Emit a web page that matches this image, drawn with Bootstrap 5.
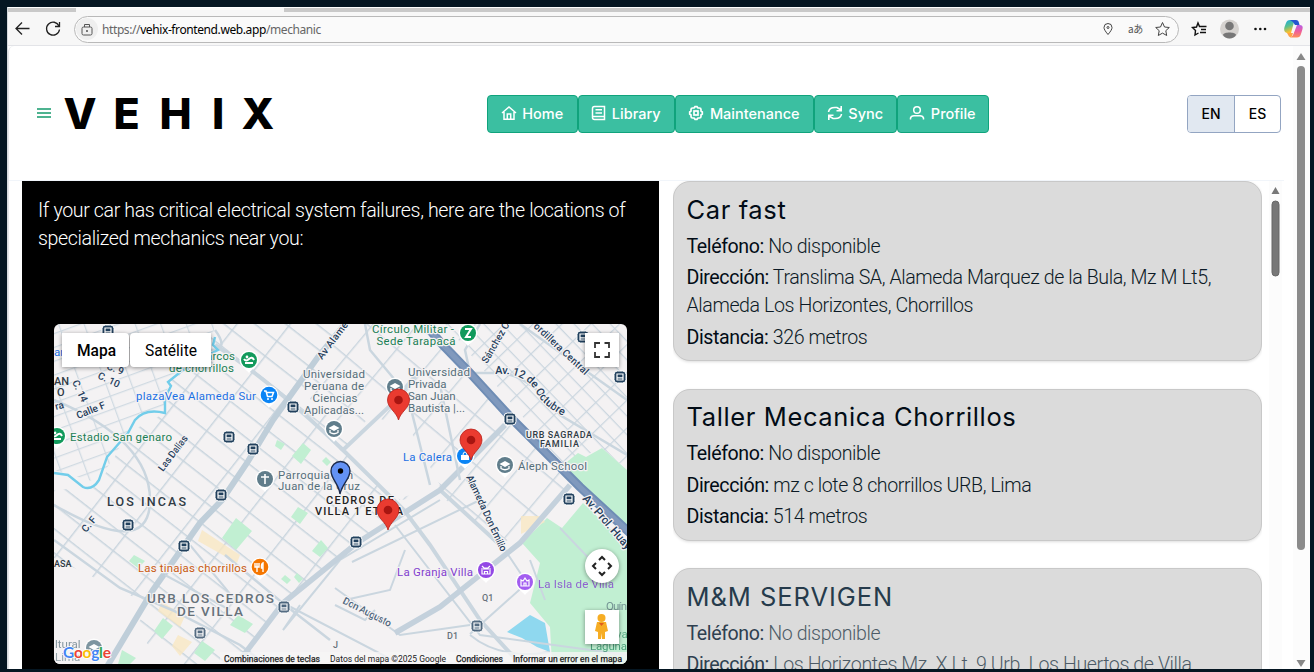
<!DOCTYPE html>
<html lang="en">
<head>
<meta charset="utf-8">
<title>Vehix</title>
<link rel="stylesheet" href="https://cdn.jsdelivr.net/npm/bootstrap@5.3.0/dist/css/bootstrap.min.css">
<style>
html,body{height:672px;overflow:hidden}
body{background:#051622;font-family:Roboto,sans-serif;padding:7px 4px 3px 7px}
svg{display:block;flex:none}
.window{height:662px;background:#fff;overflow:hidden;border-left:1px solid #d5d9dd}
.tabstrip{height:5px;background:#c9c9c9;border-top:1px solid #fff}
.tab-active{width:208px;margin-left:68px;background:#f7f7f7;height:5px}
.toolbar{height:34px;background:#f7f7f7;padding-top:1px;border-bottom:1px solid #e3e4e8}
.address{height:27px;width:1105px;margin-left:4px;margin-right:3px;border:1px solid #b9b9b9;border-radius:14px;background:#fafafa;padding:0 1px;font:12px "Noto Sans",sans-serif;color:#666;letter-spacing:-.4px}
.lockdot{width:22px;height:22px;border-radius:50%;background:#efefef}
.address b{font-weight:400;color:#000}
.page{height:623px;border-left:1px solid #e4e6e9;border-top-left-radius:6px}
.topbar{height:135px;padding:1px 0 0 27px;width:1275px;border-bottom:1px solid #f1f5fa}
.navgroup{margin-left:205px}
.navgroup .btn{height:38px;border:1px solid #10a37c;background:#3bbfa1;color:#fff;font:500 14.5px Inter,sans-serif;padding:0 1px 1px 0;border-radius:4px;gap:5.5px}
.navgroup .btn:nth-child(1){width:91px}.navgroup .btn:nth-child(2){width:97px}
.navgroup .btn:nth-child(3){width:139px}.navgroup .btn:nth-child(4){width:83px}.navgroup .btn:nth-child(5){width:92px}
.lang{margin-left:198px;width:94px;height:38px;border:1px solid #93a5c2;border-radius:4px;overflow:hidden;font:500 14px Inter,sans-serif;color:#000}
.lang span{width:46px;padding-bottom:1px}.lang .on{width:48px;background:#e1e8f1;border-right:1px solid #93a5c2}
.mappanel{width:637px;height:488px;margin-left:13px;background:#000;color:#fff}
.mappanel p{padding:15.500px 16px 0;font-size:19.6px;letter-spacing:-.37px;line-height:28px;height:143px;margin:0;font-weight:300;white-space:nowrap}
.mapbox{margin-left:32px;width:573px;height:340px;border-radius:6px;overflow:hidden}
.shops{width:589px;margin-left:14px;height:488px;overflow:hidden}
.shop{background:#dbdbdb;border:1px solid #c8c8c8;border-radius:17px;padding:11.5px 12px 8.3px 12.5px;box-shadow:0 1px 3px #0002;color:#0c1a26;font-weight:300;font-size:19.6px;letter-spacing:-.41px;line-height:28px;margin-bottom:27.7px;flex:none}
.shop h2{font:400 25.5px/32px Inter,sans-serif;letter-spacing:.62px;margin:0 0 7px;color:#020c16}
.shop p{margin:0 0 3.6px;white-space:nowrap}.shop p:last-child{margin:0}
.shop b{font-weight:400;color:#020c16}
.shop.faded{color:#4d5b67}.faded h2{color:#263b4c;letter-spacing:.95px}.faded b{color:#2e4050}
.innerbar{width:13px;margin-left:7px;background:#fcfcfc}
.outerbar{width:17px;background:#fcfcfc;height:623px}
.t{font-family:Roboto,sans-serif}
.halo{paint-order:stroke;stroke:#f4f2f3;stroke-width:2.5px;stroke-linejoin:round}
</style>
</head>
<body>
<div class="window">
  <div class="tabstrip"><div class="tab-active"></div></div>
  <div class="toolbar d-flex align-items-center">
    <svg width="62" height="28" viewBox="8 15 62 28" fill="none" stroke="#222" stroke-width="1.3"><path d="M29.500 28.500H16M22 22.500L16 28.500L22 34.500M59 26A6.500 6.500 0 1 0 59.500 29.500M59.500 22V26.500H55"/></svg>
    <div class="address d-flex align-items-center">
      <span class="lockdot d-flex align-items-center justify-content-center"><svg width="12" height="13" fill="none" stroke="#555"><rect x="1" y="4" width="10" height="8" rx="1.500"/><path d="M3.500 4V1.500H8.500V4"/><circle cx="6" cy="8" r=".6" fill="#222"/></svg></span>
      <span class="ps-1 flex-grow-1">https://<b>vehix-frontend.web.app</b>/mechanic</span>
      <svg width="76" height="24" viewBox="1101 17 76 24" fill="none" stroke="#444"><path d="M1108 34.500C1105 31 1104 29 1104 27.500A4 4 0 0 1 1112 27.500C1112 29 1111 31 1108 34.500Z"/><circle cx="1108" cy="27.500" r="1" /><text x="1128" y="33" font-size="10" letter-spacing="-.4" font-family="Noto Sans CJK JP,sans-serif" fill="#555" stroke="none">aあ</text><path d="M1162.500 22.500L1164.500 27L1169.300 27.500L1165.800 30.700L1166.700 35.500L1162.500 33.100L1158.300 35.500L1159.200 30.700L1155.700 27.500L1160.500 27Z"/></svg>
    </div>
    <svg width="124" height="30" viewBox="1182 14 124 30" fill="none">
      <defs><linearGradient id="cop" x1="0" y1="0" x2="0" y2="1"><stop offset="0" stop-color="#b65fe8"/><stop offset=".5" stop-color="#ee5d9c"/><stop offset="1" stop-color="#ff8f58"/></linearGradient><linearGradient id="cop2" x1="0" y1="0" x2=".3" y2="1"><stop offset="0" stop-color="#12a8e8"/><stop offset=".55" stop-color="#5cc08b"/><stop offset="1" stop-color="#ffc02c"/></linearGradient></defs>
      <path d="M1201 26.500H1199.500L1198 23L1196.500 27L1192.500 27.500L1195.500 30.500L1195 35L1198.500 33M1201 26.500H1206.500M1201 29.500H1206M1200 32.500H1206" stroke="#111" stroke-width="1.400"/>
      <circle cx="1229.500" cy="29" r="9.500" fill="#d5d2cf"/><circle cx="1229.500" cy="26" r="4.300" fill="#777"/><path d="M1223 35C1223 31.500 1236 31.500 1236 35C1234 39.500 1225 39.500 1223 35Z" fill="#777"/>
      <g fill="#111"><circle cx="1255.500" cy="29" r="1.300"/><circle cx="1260.300" cy="29" r="1.300"/><circle cx="1265" cy="29" r="1.300"/></g>
      <path d="M1297 25H1299.500Q1303.500 25 1302.500 29L1301 34Q1300 37.500 1297 37.500H1290Q1292.500 37 1293.500 34Z" fill="url(#cop)"/><path d="M1290 20H1294Q1294 21 1293.500 24L1291 33H1287Q1283 32 1284.500 27L1286 23Q1287 20 1290 20Z" fill="url(#cop2)"/><path d="M1290 20H1296Q1298.500 20 1299 23L1299.500 25H1295Q1294 22 1290 20Z" fill="#2456cf"/><path d="M1287 33H1293L1292 36Q1291 38 1289 36.500Z" fill="#ffa347"/>
    </svg>
  </div>
  <div class="page d-flex">
    <main style="width:1284px">
      <header class="topbar d-flex align-items-center">
        <svg width="246" height="50" viewBox="36 89 246 50"><path d="M37 109H51M37 113H51M37 117H51" stroke="#159a6c" stroke-width="1.300"/><text y="129" x="63.500 113.500 159.500 212 241.500" font-family="Inter,sans-serif" font-weight="800" font-size="43">VEHIX</text></svg>
        <nav class="navgroup d-flex">
          <a class="btn d-flex align-items-center justify-content-center"><svg width="16" height="16" fill="none" stroke="#fff" stroke-width="1.500"><path d="M1 8L8 2L15 8M3 7V14.300H13V7M6.300 14V9H9.700V14"/></svg><span>Home</span></a>
          <a class="btn d-flex align-items-center justify-content-center"><svg width="15" height="16" fill="none" stroke="#fff" stroke-width="1.500"><path d="M3.500 1.500H13.500V14.500H3.500Q1.500 14.500 1.500 12.500V3.500Q1.500 1.500 3.500 1.500ZM2 11.500H13M4.500 4.800H11M4.500 8H11"/></svg><span>Library</span></a>
          <a class="btn d-flex align-items-center justify-content-center"><svg width="16" height="16" fill="none" stroke="#fff" stroke-width="1.700"><path d="M6 3L7 1.700H9L10 3H11.500Q13 3 13 4.500V6L14.300 7V9L13 10V11.500Q13 13 11.500 13H10L9 14.300H7L6 13H4.500Q3 13 3 11.500V10L1.700 9V7L3 6V4.500Q3 3 4.500 3Z"/><rect x="6" y="6" width="4" height="4"/></svg><span>Maintenance</span></a>
          <a class="btn d-flex align-items-center justify-content-center"><svg width="16" height="16" fill="none" stroke="#fff" stroke-width="1.600"><path d="M1.500 7Q2 2.500 8 2.500H10L14 5M14.200 1V5.800H9.500M14.500 9Q14 13.500 8 13.500H6L2 11M1.800 15V10.200H6.500"/></svg><span>Sync</span></a>
          <a class="btn d-flex align-items-center justify-content-center"><svg width="16" height="16" fill="none" stroke="#fff" stroke-width="1.500"><circle cx="8" cy="5" r="3.300"/><path d="M1.500 14.500V13Q2 10.700 5 10.700H11Q14 10.700 14.500 13V14.500"/></svg><span>Profile</span></a>
        </nav>
        <div class="lang d-flex"><span class="on d-flex align-items-center justify-content-center">EN</span><span class="d-flex align-items-center justify-content-center">ES</span></div>
      </header>
      <div class="d-flex">
        <section class="mappanel">
          <p>If your car has critical electrical system failures, here are the locations of<br>specialized mechanics near you:</p>
          <div class="mapbox">
<svg class="t" width="573" height="340" viewBox="54 324 573 340">
<defs>
<pattern id="ga" width="42" height="19" patternUnits="userSpaceOnUse" patternTransform="translate(230 400) rotate(38)"><path d="M0 .5H42M.5 0V19" stroke="#c9d5de" stroke-width="1.900" fill="none"/></pattern>
<pattern id="gb" width="20" height="13" patternUnits="userSpaceOnUse" patternTransform="translate(540 400) rotate(46)"><path d="M0 .5H20M.5 0V13" stroke="#cbd6df" stroke-width="1.500" fill="none"/></pattern>
<pattern id="gc" width="24" height="13" patternUnits="userSpaceOnUse" patternTransform="translate(60 400) rotate(-20)"><path d="M0 .5H24M.5 0V13" stroke="#d0dae2" stroke-width="1.500" fill="none"/></pattern>
<pattern id="gd" width="34" height="38" patternUnits="userSpaceOnUse" patternTransform="translate(400 450) rotate(40)"><path d="M0 .5H34M.5 0V38" stroke="#cbd6df" stroke-width="1.800" fill="none"/></pattern>
<g id="bus"><rect x="-6" y="-6" width="12" height="12" rx="3.500" fill="#21405d" stroke="#fff"/><path d="M-3 -3H3V3H-3ZM-3 .8H3" fill="none" stroke="#fff" stroke-width="1.200"/></g>
<g id="pin"><path d="M0 20C-2 12 -11 8 -11 0A11 11 0 0 1 11 0C11 8 2 12 0 20Z" fill="#ea3b30" stroke="#b8221c" stroke-width=".8"/><circle r="4.300" fill="#a81511"/></g>
<path id="drop" d="M-9.500 0A9.500 9.500 0 0 1 9.500 0C9.500 6 3 9 0 13C-3 9 -9.500 6 -9.500 0Z" fill="#fff"/>
<g id="school"><use href="#drop"/><circle r="8" fill="#607d8b"/><path d="M-5.500 -1L0 -4L5.500 -1L0 2Z" fill="#fff"/><path d="M-4 1V3.500Q0 6 4 3.500V1" fill="none" stroke="#fff" stroke-width="1.300"/></g>
</defs>
<path fill="#f4f2f3" d="M54 324H627V664H54Z"/>
<path fill="url(#gc)" d="M54 324H215L210 350L168 385L165 413L140 413L98 483L54 470Z"/>
<path fill="url(#ga)" d="M215 324H345L305 390L400 500L370 535L285 600L240 664H170L54 560V490L98 487L128 433L165 413L168 382Z"/>
<path fill="url(#gd)" d="M345 324H430L570 485L540 520L500 545L440 495L400 500L340 450L305 390Z"/>
<path fill="url(#gb)" d="M445 324H627V470L602 448L563 465Z"/>
<path fill="#f4f2f3" d="M54 558L150 605L112 664H54ZM370 415L410 430L440 485L395 500L345 450Z"/>
<g fill="#c1efd2"><path d="M563 465L578 453L586 457L602 448L627 470V530L588 490Z"/><path d="M583 503L627 545V664H552L550 627L530 603L540 563L522 543L547 518L562 528Z"/><path d="M303 443L311 450L301 464L292 456ZM277 440L285 444L281 450L275 446ZM326 457L331 462L327 466L322 461ZM236 518L252 531L236 550L222 538ZM298 507L308 513L300 524L291 517ZM321 540L328 548L320 557L312 551ZM134 555L145 561L138 568L129 561ZM163 618L173 626L162 639L154 631ZM202 641L215 650L205 661L194 653ZM238 615L253 624L245 633L230 625ZM122 650L136 658L130 664H118ZM285 575L291 580L287 584L281 579ZM297 573L303 579L299 583L294 577Z"/></g>
<g fill="#f9e7c3"><path d="M202 530L240 555L237 563L198 541ZM162 602L185 616L180 627L158 611ZM178 635L192 642L180 656L172 646ZM521 516H540L545 522L521 534Z" opacity=".8"/></g>
<path d="M507 632L530 615L545 623L550 652L537 647L522 638Z" fill="#8fd8ef"/>
<g fill="none" stroke="#cad6df" stroke-width="3">
<path d="M54 540L120 588L172 610L240 645L265 664M54 400Q150 440 150 500T54 505M215 330Q230 350 210 350L195 353" stroke-width="2.500"/>
<path d="M215 345Q270 380 343 450L404 510L430 545L480 620L520 664M440 490L500 545M343 450L393 403L420 370" stroke-width="4"/>
<path d="M352 562L480 500M395 525L480 635L627 655M335 588L400 635L470 625M283 603L400 664M300 605L283 630L340 560L440 500M405 550L390 590L345 600M470 634L527 583M467 480L507 553L527 583M470 635Q500 660 550 652" stroke-width="2"/>
<path d="M345 324L318 357L273 420L247 463L222 500L200 523L153 590L105 670" stroke="#bfced9" stroke-width="6"/>
<path d="M240 660L283 603L357 543L440 490L505 425M395 633L440 607L520 543L570 485" stroke="#c4d1dc" stroke-width="5.500"/>
<path d="M225 555L285 605L330 640M480 324L465 350L470 373H500Q530 375 560 415L627 455M520 324L627 400M365 324L370 350L395 380M440 385L460 480M410 405L430 485" stroke-width="2.500"/>
</g>
<path d="M560 528L600 570M530 560L545 600M335 605L365 620L375 610M190 545L235 600M165 575L230 610" stroke="#cad6df" stroke-width="2" fill="none"/>
<path d="M215 337L213 345L218 350L212 353L208 366L183 370L168 382L171 386L165 398V413Q145 408 135 420L128 433L107 457L99 480Q92 491 83 487L68 475L54 473" fill="none" stroke="#72cdea" stroke-width="2.400"/>
<path d="M425 324L440 342L470 373L513 420L580 487L630 533" fill="none" stroke="#6f8db5" stroke-width="9"/><path d="M425 324L440 342L470 373L513 420L580 487L630 533" fill="none" stroke="#8099bd" stroke-width="5"/>
<g font-size="11.500" font-weight="400">
<g fill="#1a7f55"><text class="halo" x="413" y="333" text-anchor="middle" textLength="82">Círculo Militar -</text><text class="halo" x="416" y="345" text-anchor="middle" textLength="79">Sede Tarapacá</text><text class="halo" x="196" y="360" textLength="39">Marcos</text><text class="halo" x="169" y="372" textLength="65">de chorrillos</text><text class="halo" x="70" y="441" textLength="102">Estadio San genaro</text><text x="590" y="650" textLength="37" opacity=".7">Laguna</text><text x="616" y="638" opacity=".6">va</text></g>
<g fill="#1b70e4"><text class="halo" x="136" y="400" textLength="120">plazaVea Alameda Sur</text><text class="halo" x="403" y="461" textLength="49">La Calera</text><text x="54" y="356">ar</text></g>
<g fill="#546e7a"><g text-anchor="middle"><text class="halo" x="334" y="378" textLength="62">Universidad</text><text class="halo" x="334" y="390" textLength="60">Peruana de</text><text class="halo" x="335" y="402" textLength="45">Ciencias</text><text class="halo" x="334" y="414" textLength="60">Aplicadas...</text></g><text class="halo" x="408" y="376" textLength="62">Universidad</text><text class="halo" x="408" y="388">Privada</text><text class="halo" x="408" y="400">San Juan</text><text class="halo" x="408" y="412">Bautista |...</text><text class="halo" x="278" y="479" textLength="75">Parroquia San</text><text class="halo" x="278" y="490" textLength="82">Juan de la Cruz</text><text class="halo" x="518" y="470" textLength="69">Áleph School</text><text x="606" y="610" textLength="21" opacity=".7">Quín</text><text x="55" y="648" opacity=".7">ltural</text><text x="55" y="661" opacity=".6">Lima</text></g>
<text class="halo" x="138" y="572" textLength="109" fill="#c95a10">Las tinajas chorrillos</text>
<g fill="#8240cf"><text class="halo" x="397" y="576" textLength="76">La Granja Villa</text><text x="538" y="588" textLength="76" opacity=".8">La Isla de Villa</text></g>
</g>
<g fill="#303b45" font-weight="500"><g font-size="12.500"><text class="halo" x="107" y="506" textLength="79">LOS INCAS</text></g><g font-size="11" fill="#222"><text class="halo" x="326" y="504" textLength="68">CEDROS DE</text><text class="halo" x="315" y="515" textLength="88">VILLA 1 ETAPA</text></g><g font-size="9"><text class="halo" x="526" y="438" textLength="66">URB SAGRADA</text><text class="halo" x="540" y="447" textLength="39">FAMILIA</text><text x="54" y="567">ASA</text><text x="482" y="601" fill="#66717a">Q1</text><text x="447" y="639" fill="#66717a">D1</text><text x="333" y="648" fill="#66717a">J</text><text x="54" y="385" font-size="11">AN</text><text x="57" y="396" font-size="11">O</text></g><g font-size="13.500" fill="#66717a"><text class="halo" x="147" y="603" textLength="127">URB LOS CEDROS</text><text class="halo" x="177" y="616" textLength="66">DE VILLA</text></g></g>
<g fill="#263e5c" font-size="10" font-weight="500">
<text class="halo" transform="translate(322 360) rotate(-53)" textLength="44">Av Alame</text><text class="halo" transform="translate(78 419) rotate(-22)">Calle F</text><text class="halo" transform="translate(163 472) rotate(-53)" textLength="42">Las Dalias</text><text class="halo" transform="translate(86 533) rotate(-50)">C. F</text><text class="halo" transform="translate(72 382) rotate(65)">C. 14</text><text class="halo" transform="translate(97 378) rotate(25)">C. 10</text><text class="halo" transform="translate(106 369) rotate(20)">C. 9</text><text transform="translate(56 410) rotate(-15)">ra</text>
<text class="halo" transform="translate(487 364) rotate(-60)" textLength="48">Sánchez C.</text><text class="halo" transform="translate(533 327) rotate(43)" textLength="71">ordillera Central</text>
<path id="oct" d="M495 374Q525 372 536 392Q544 408 570 419" fill="none"/><text class="halo" font-size="11"><textPath href="#oct" textLength="84">Av. 12 de Octubre</textPath></text>
<text class="halo" transform="translate(466 477) rotate(65)" textLength="83">Alameda Don Emilio</text><text class="halo" fill="#4c647b" transform="translate(342 603) rotate(27)" textLength="53">Don Augusto</text><text class="halo" font-size="11.500" transform="translate(582 499) rotate(49)" textLength="68">Av. Prol. Huay</text></g>
<use href="#bus" x="293" y="407"/><use href="#bus" x="229" y="437"/><use href="#bus" x="253" y="449"/><use href="#bus" x="221" y="495"/><use href="#bus" x="128" y="525"/><use href="#bus" x="184" y="546"/><use href="#bus" x="356" y="542"/><use href="#bus" x="510" y="419"/><use href="#bus" x="620" y="377"/><use href="#bus" x="569" y="499"/><use href="#bus" x="583" y="337"/><use href="#bus" x="108" y="331"/><g opacity=".75"><use href="#bus" x="284" y="607"/><use href="#bus" x="200" y="633"/><use href="#bus" x="477" y="626"/></g>
<use href="#school" x="334" y="429"/><use href="#school" x="395" y="387"/><use href="#school" x="505" y="465"/><use href="#school" x="94" y="648" opacity=".8"/>
<g transform="translate(265 479)"><use href="#drop"/><circle r="8" fill="#607d8b"/><path d="M0 -5V5M-4 -2H4" stroke="#fff" stroke-width="1.600"/></g>
<g id="fit" transform="translate(249 360)"><use href="#drop"/><circle r="8" fill="#129a5c"/><path d="M-5 -1Q-3 2 0 -1T5 0M-4 3H4" stroke="#fff" stroke-width="2" fill="none"/><circle cx="-2" cy="-3" r="1.400" fill="#fff"/></g><use href="#fit" x="-192" y="76"/>
<g transform="translate(468 333)"><use href="#drop"/><circle r="8" fill="#129a5c"/><path d="M-3 -4H3L-2 4H3" stroke="#fff" stroke-width="2" fill="none"/></g>
<g transform="translate(269 395)"><use href="#drop"/><circle r="8.300" fill="#0a84f5"/><path d="M-5 -4H-3L-1.500 1.500H3L4.500 -2.500H-2.500" stroke="#fff" stroke-width="1.500" fill="none"/><circle cx="-1" cy="4" r="1" fill="#fff"/><circle cx="3" cy="4" r="1" fill="#fff"/></g>
<g transform="translate(465 456)"><use href="#drop"/><circle r="8" fill="#0a84f5"/><path d="M-4 4V-1H4V4Z" fill="#fff"/><path d="M-2 -1Q-2 -4 0 -4T2 -1" fill="none" stroke="#fff"/></g>
<g transform="translate(260 567)"><use href="#drop"/><circle r="8.300" fill="#f57600"/><path d="M-3 5V-4M-5 -4V0H-1V-4M3 5V-4Q1 -3 1.500 1H3" stroke="#fff" stroke-width="1.400" fill="none"/></g>
<g transform="translate(486 570)"><use href="#drop"/><circle r="8" fill="#9348e5"/><path d="M-4 -4L-2 -2H2L4 -4M-5 -1H5M-4 0V4H4V0M-1.500 4V1.500H1.500V4" stroke="#fff" stroke-width="1.200" fill="none"/></g>
<g transform="translate(525 582)"><use href="#drop"/><circle r="8" fill="#a35df0"/><path d="M-4 4V-2L-2 -1L0 -4L2 -1L4 -2V4ZM-1 4V1H1V4" stroke="#fff" stroke-width="1.200" fill="none"/></g>
<use href="#pin" x="398.500" y="400"/><use href="#pin" x="471" y="440"/><use href="#pin" x="388" y="510"/>
<path d="M340 494C339 484 331 479 331 471A9.500 9.500 0 0 1 350 471C350 479 342 484 340 494Z" fill="#6392f5" stroke="#1c2b4d" stroke-width="1.400"/><circle cx="340.500" cy="471" r="2.700"/>
<g style="filter:drop-shadow(0 1px 2px #0006)" fill="#fff"><path d="M62 333H125Q129 333 129 337V363Q129 367 125 367H62ZM134 333H211V367H134Q130 367 130 363V337Q130 333 134 333Z"/><path d="M585 333H619V367H585ZM585 610H619V644H585Z"/><circle cx="602" cy="566" r="17"/></g>
<text x="77" y="355.500" font-size="16" font-weight="500" textLength="39" lengthAdjust="spacingAndGlyphs">Mapa</text><text x="145" y="355.500" font-size="16" textLength="52" lengthAdjust="spacingAndGlyphs">Satélite</text>
<path d="M600 343H595V348M604.500 343H609V348M600 357H595V352M604.500 357H609V352" stroke="#333" stroke-width="1.800" fill="none"/>
<path d="M599 560L602 557L605 560M599 572L602 575L605 572M596 563L593 566L596 569M608 563L611 566L608 569" stroke="#222" stroke-width="2" fill="none"/>
<g fill="#f6ad24"><circle cx="601.500" cy="618" r="4"/><path d="M597 622H606L608 631L605 632L605 639H602L601.500 633L601 639H598L598 632L595 631Z"/></g><path d="M599 623L601.500 626L604 623Z" fill="#e15c1d"/>
<path d="M220 652H627V664H220Z" fill="#f7f5f6" opacity=".75"/><g font-size="8.500" fill="#222"><text x="224" y="661.500" textLength="96" stroke="#222" stroke-width=".25">Combinaciones de teclas</text><text x="330" y="661.500" textLength="116">Datos del mapa ©2025 Google</text><text x="456" y="661.500" textLength="47" stroke="#222" stroke-width=".25">Condiciones</text><text x="513" y="661.500" textLength="109" stroke="#222" stroke-width=".25">Informar un error en el mapa</text></g>
<text x="63" y="658" font-family="Lato,sans-serif" font-size="15.500" font-weight="700" textLength="48" style="paint-order:stroke;stroke:#fff;stroke-width:1.500px"><tspan fill="#4285f4">G</tspan><tspan fill="#ea4335">o</tspan><tspan fill="#fbbc05">o</tspan><tspan fill="#4285f4">g</tspan><tspan fill="#34a853">l</tspan><tspan fill="#ea4335">e</tspan></text>
</svg>
          </div>
        </section>
        <section class="shops d-flex flex-column">
          <article class="shop"><h2>Car fast</h2><p><b>Teléfono:</b> No disponible</p><p><b>Dirección:</b> Translima SA, Alameda Marquez de la Bula, Mz M Lt5,<br>Alameda Los Horizontes, Chorrillos</p><p><b>Distancia:</b> 326 metros</p></article>
          <article class="shop"><h2>Taller Mecanica Chorrillos</h2><p><b>Teléfono:</b> No disponible</p><p><b>Dirección:</b> mz c lote 8 chorrillos URB, Lima</p><p><b>Distancia:</b> 514 metros</p></article>
          <article class="shop faded"><h2>M&amp;M SERVIGEN</h2><p><b>Teléfono:</b> No disponible</p><p><b>Dirección:</b> Los Horizontes Mz. X Lt. 9 Urb. Los Huertos de Villa</p></article>
        </section>
        <div class="innerbar"><svg width="13" height="100"><path d="M2.500 13L6.500 6L10.500 13Z" fill="#777"/><rect x="3" y="20" width="7" height="75" rx="3.500" fill="#777" stroke="#666"/></svg></div>
      </div>
    </main>
    <div class="outerbar"><svg width="17" height="623"><path d="M3.500 14L8 7L12.500 14Z" fill="#888"/><rect x="4" y="20" width="8" height="484" rx="4" fill="#8b8b8b"/><path d="M3.500 614L8 621L12.500 614Z" fill="#888"/></svg></div>
  </div>
</div>
<script src="https://cdn.jsdelivr.net/npm/bootstrap@5.3.0/dist/js/bootstrap.bundle.min.js"></script>
</body>
</html>
